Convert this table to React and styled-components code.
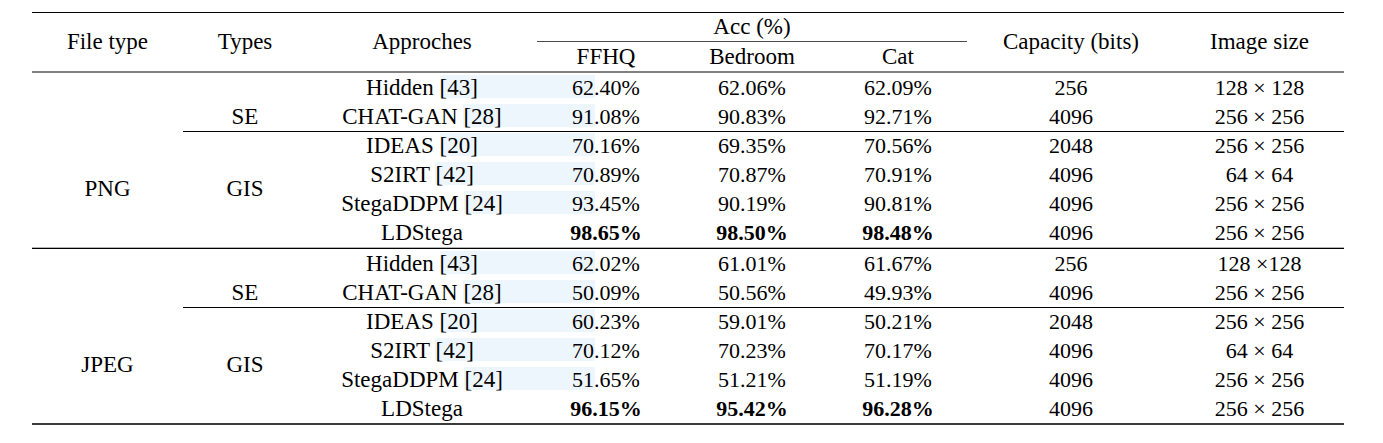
import React from 'react';
import styled, { createGlobalStyle } from 'styled-components';

const GlobalStyle = createGlobalStyle`
    body {
        margin: 0;
        background: #ffffff;
        color: #000;
    }
`;

const SERIF = `"Liberation Serif", "Times New Roman", "DejaVu Serif", serif`;
const COLS = '151px 124px 230px 138px 154px 138px 208px 169px';

const blocks = [
    {
        file: 'PNG',
        rows: [
            ['Hidden', '43', '62.40%', '62.06%', '62.09%', '256', '128 × 128'],
            ['CHAT-GAN', '28', '91.08%', '90.83%', '92.71%', '4096', '256 × 256'],
            ['IDEAS', '20', '70.16%', '69.35%', '70.56%', '2048', '256 × 256'],
            ['S2IRT', '42', '70.89%', '70.87%', '70.91%', '4096', '64 × 64'],
            ['StegaDDPM', '24', '93.45%', '90.19%', '90.81%', '4096', '256 × 256'],
            ['LDStega', null, '98.65%', '98.50%', '98.48%', '4096', '256 × 256'],
        ],
    },
    {
        file: 'JPEG',
        rows: [
            ['Hidden', '43', '62.02%', '61.01%', '61.67%', '256', '128 ×128'],
            ['CHAT-GAN', '28', '50.09%', '50.56%', '49.93%', '4096', '256 × 256'],
            ['IDEAS', '20', '60.23%', '59.01%', '50.21%', '2048', '256 × 256'],
            ['S2IRT', '42', '70.12%', '70.23%', '70.17%', '4096', '64 × 64'],
            ['StegaDDPM', '24', '51.65%', '51.21%', '51.19%', '4096', '256 × 256'],
            ['LDStega', null, '96.15%', '95.42%', '96.28%', '4096', '256 × 256'],
        ],
    },
];

function App() {
    return (
        <>
            <GlobalStyle />
            <Page>
                <Table>
                    <TopRule />
                    <Header>
                        <HeadCell $col="1" $row="1 / 4">File type</HeadCell>
                        <HeadCell $col="2" $row="1 / 4">Types</HeadCell>
                        <HeadCell $col="3" $row="1 / 4">Approches</HeadCell>
                        <HeadCell $col="4 / 7" $row="1">Acc (%)</HeadCell>
                        <GroupRule />
                        <HeadCell $col="4" $row="3">FFHQ</HeadCell>
                        <HeadCell $col="5" $row="3">Bedroom</HeadCell>
                        <HeadCell $col="6" $row="3">Cat</HeadCell>
                        <HeadCell $col="7" $row="1 / 4">Capacity (bits)</HeadCell>
                        <HeadCell $col="8" $row="1 / 4">Image size</HeadCell>
                    </Header>
                    <HeadRule />
                    {blocks.map((block, bi) => (
                        <React.Fragment key={block.file}>
                            {bi > 0 && <MidRule />}
                            <Block>
                                <SpanCell $col="1" $row="3 / 7">{block.file}</SpanCell>
                                <SpanCell $col="2" $row="2">SE</SpanCell>
                                <SpanCell $col="2" $row="3 / 7">GIS</SpanCell>
                                {block.rows.map((r, i) => {
                                    const row = i + 1;
                                    const bold = r[1] === null;
                                    return (
                                        <React.Fragment key={r[0]}>
                                            <MethodCell $row={row}>
                                                {r[0]}
                                                {r[1] && (
                                                    <>
                                                        {' '}
                                                        <Cite>[{r[1]}]</Cite>
                                                    </>
                                                )}
                                            </MethodCell>
                                            <NumCell $col={4} $row={row} $bold={bold}>{r[2]}</NumCell>
                                            <NumCell $col={5} $row={row} $bold={bold}>{r[3]}</NumCell>
                                            <NumCell $col={6} $row={row} $bold={bold}>{r[4]}</NumCell>
                                            <NumCell $col={7} $row={row}>{r[5]}</NumCell>
                                            <NumCell $col={8} $row={row}>{r[6]}</NumCell>
                                        </React.Fragment>
                                    );
                                })}
                                <GroupLine />
                            </Block>
                        </React.Fragment>
                    ))}
                    <BottomRule />
                </Table>
            </Page>
        </>
    );
}

const Page = styled.div`
    width: 1383px;
    height: 443px;
    padding-top: 12px;
    box-sizing: border-box;
    font-family: ${SERIF};
`;

const Table = styled.div`
    margin-left: 32px;
    width: 1312px;
    display: flex;
    flex-direction: column;
    font-family: ${SERIF};
`;

const TopRule = styled.div`
    height: 1px;
    background: #000;
`;

const HeadRule = styled.div`
    height: 2px;
    background: #808080;
`;

const MidRule = styled.div`
    height: 1px;
    border-top: 1px solid #b4b4b4;
    background: #000;
`;

const BottomRule = styled.div`
    height: 2px;
    background: #3a3a3a;
`;

const Header = styled.div`
    display: grid;
    grid-template-columns: ${COLS};
    grid-template-rows: 28px 1px 29px;
`;

const HeadCell = styled.div`
    grid-column: ${p => p.$col};
    grid-row: ${p => p.$row};
    display: flex;
    align-items: center;
    justify-content: center;
    font-size: 23px;
    white-space: nowrap;
`;

const GroupRule = styled.div`
    grid-column: 4 / 7;
    grid-row: 2;
    background: #4a4a4a;
`;

const Block = styled.div`
    display: grid;
    grid-template-columns: ${COLS};
    grid-template-rows: repeat(6, 29px);
`;

const SpanCell = styled.div`
    grid-column: ${p => p.$col};
    grid-row: ${p => p.$row};
    display: flex;
    align-items: center;
    justify-content: center;
    font-size: 23px;
`;

const MethodCell = styled.div`
    grid-column: 3;
    grid-row: ${p => p.$row};
    margin-right: -58px;
    padding-right: 58px;
    overflow: hidden;
    position: relative;
    z-index: 0;
    text-align: center;
    font-size: 23px;
    line-height: 29px;
    white-space: nowrap;
`;

const Cite = styled.span`
    position: relative;
    display: inline-block;
    height: 29px;

    &::before {
        content: '';
        position: absolute;
        left: 0;
        top: 2px;
        bottom: 4px;
        width: 400px;
        background: #edf5fd;
        z-index: -1;
    }
`;

const NumCell = styled.div`
    grid-column: ${p => p.$col};
    grid-row: ${p => p.$row};
    position: relative;
    display: flex;
    align-items: center;
    justify-content: center;
    font-size: 22px;
    font-weight: ${p => (p.$bold ? 700 : 400)};
    white-space: nowrap;
`;

const GroupLine = styled.div`
    grid-column: 2 / -1;
    grid-row: 3;
    align-self: start;
    height: 1px;
    background: #000;
`;

export default App;
